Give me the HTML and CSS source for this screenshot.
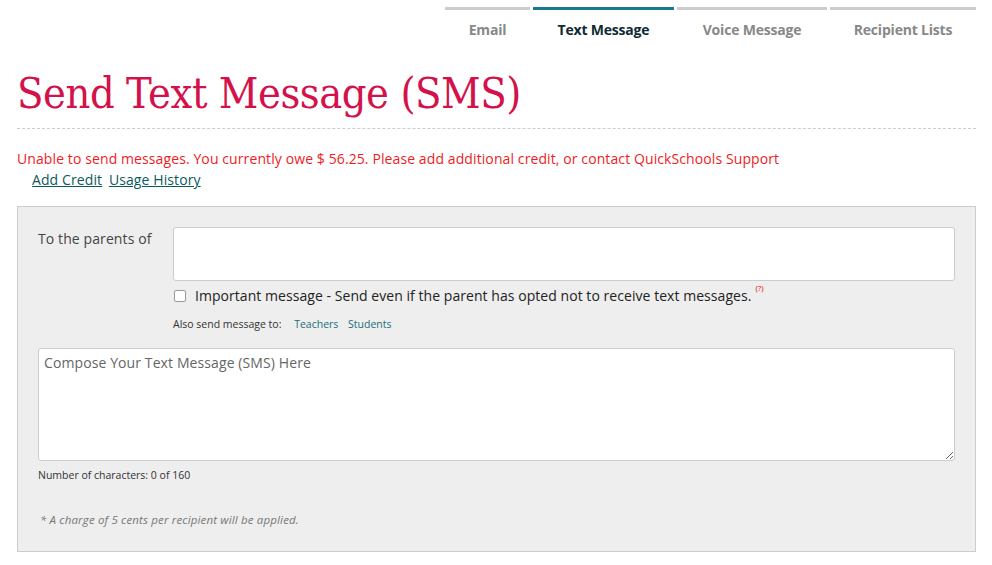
FILE: index.html
```html
<!DOCTYPE html>
<html>
<head>
<meta charset="utf-8">
<link rel="stylesheet" href="styles.css">
</head>
<body>
<div class="page">
  <nav class="tabs">
    <a class="tab tab-email">Email</a>
    <a class="tab tab-text active">Text Message</a>
    <a class="tab tab-voice">Voice Message</a>
    <a class="tab tab-lists">Recipient Lists</a>
  </nav>
  <h1 class="title">Send Text Message (SMS)</h1>
  <div class="error">Unable to send messages. You currently owe $ 56.25. Please add additional credit, or contact QuickSchools Support</div>
  <div class="links"><a href="#">Add Credit</a> <a href="#">Usage History</a></div>
  <div class="panel">
    <div class="row">
      <label class="row-label">To the parents of</label>
      <div class="row-body">
        <div class="recipients"></div>
        <div class="important">
          <span class="checkbox"></span>
          <span class="important-text">Important message - Send even if the parent has opted not to receive text messages.</span>
          <sup class="help">(?)</sup>
        </div>
        <div class="also">Also send message to: <a class="also-first" href="#">Teachers</a> <a href="#">Students</a></div>
      </div>
    </div>
    <textarea class="compose" placeholder="Compose Your Text Message (SMS) Here"></textarea>
    <div class="count">Number of characters: 0 of 160</div>
    <div class="note">* A charge of 5 cents per recipient will be applied.</div>
  </div>
</div>
</body>
</html>
```
FILE: styles.css
```css
* { box-sizing: border-box; }
html, body { margin: 0; padding: 0; background: #fff; }
body { font-family: "Open Sans", Lato, Arial, sans-serif; color: #333; }
.page { padding: 0 16px 0 17px; }

.tabs { display: flex; justify-content: flex-end; gap: 3px; padding-top: 7px; }
.tab {
  display: block;
  border-top: 3px solid #cccccc;
  font-size: 14px;
  font-weight: 700;
  color: #888;
  text-align: center;
  padding-top: 10px;
  height: 35px;
  letter-spacing: -0.2px;
}
.tab.active { border-top-color: #1b7891; color: #0e2b33; }
.tab-email { width: 85px; }
.tab-text { width: 141px; }
.tab-voice { width: 150px; }
.tab-lists { width: 146px; }

.title {
  margin: 25px 0 0 0;
  font-family: "DejaVu Serif Condensed", "DejaVu Serif", "Liberation Serif", serif;
  font-stretch: semi-condensed;
  font-weight: 400;
  font-size: 43px;
  line-height: 52px;
  color: #d3124c;
  padding-bottom: 9px;
  border-bottom: 1px dashed #cccccc;
  letter-spacing: -0.45px;
}

.error { margin-top: 20px; font-size: 14px; letter-spacing: 0.1px; color: #ee1c25; line-height: 20px; }
.links { padding-left: 15px; font-size: 14px; letter-spacing: 0.1px; line-height: 22px; }
.links a { color: #0b5a5c; text-decoration: underline; margin-right: 3px; }

.panel {
  margin-top: 15px;
  background: #eeeeee;
  border: 1px solid #cccccc;
  padding: 20px 20px 20px 20px;
  height: 346px;
}
.row { display: flex; }
.row-label { width: 135px; font-size: 14px; letter-spacing: 0.1px; color: #444; padding-top: 4px; line-height: 16px; }
.row-body { flex: 1; }
.recipients { height: 54px; background: #fff; border: 1px solid #cccccc; border-radius: 3px; }
.important { display: flex; align-items: center; margin-top: 5px; font-size: 14px; letter-spacing: 0.05px; color: #222; }
.checkbox { width: 12px; height: 12px; border: 1px solid #999; border-radius: 2px; background: #fff; margin: 0 9px 0 1px; }
.help { font-size: 8px; color: #e00; align-self: flex-start; margin-left: 4px; margin-top: -4px; }
.also { margin-top: 12px; font-size: 10.5px; color: #333; }
.also a { color: #1a6f78; text-decoration: none; margin-left: 7px; }
.also a.also-first { margin-left: 10px; }

.compose {
  display: block;
  margin-top: 17px;
  width: 100%;
  height: 113px;
  border: 1px solid #cccccc;
  border-radius: 3px;
  background: #fff;
  font-family: "Open Sans", Lato, Arial, sans-serif;
  font-size: 14px;
  letter-spacing: 0.1px;
  padding: 4px 5px;
  resize: vertical;
}
.compose::placeholder { color: #666; }
.count { margin-top: 7px; font-size: 10.5px; color: #333; }
.note { margin-top: 30px; font-size: 11.5px; font-style: italic; color: #777; padding-left: 2px; letter-spacing: 0.15px; }
```
